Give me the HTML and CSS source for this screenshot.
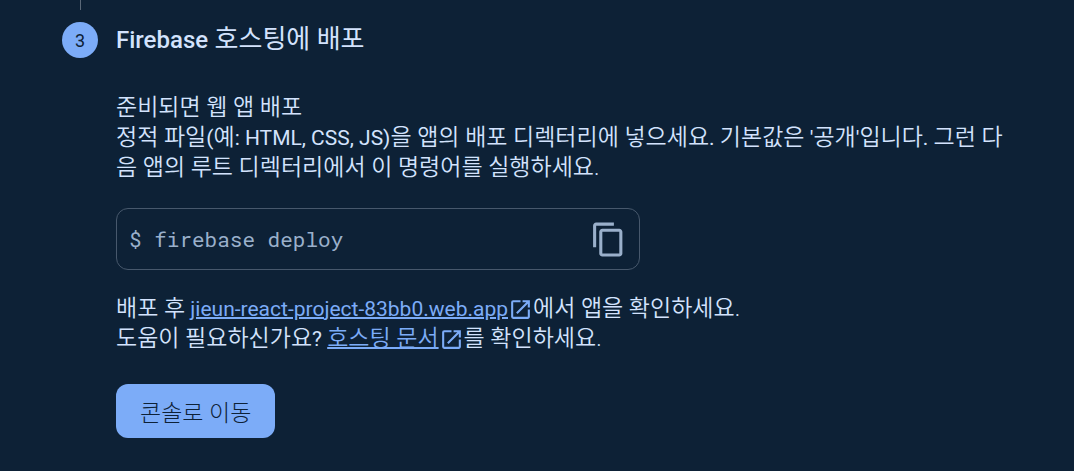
FILE: index.html
```
<!DOCTYPE html>
<html lang="ko">
<head>
<meta charset="utf-8">
<title>Firebase 호스팅에 배포</title>
<link rel="stylesheet" href="styles.css">
</head>
<body>
<main class="step">
  <div class="rail">
    <span class="rail-line"></span>
    <span class="step-number">3</span>
  </div>
  <section class="content">
    <h2 class="title"><span class="title-latin">Firebase</span> 호스팅에 배포</h2>
    <p class="text">준비되면 웹 앱 배포<br>정적 파일<span class="latin">(</span>예<span class="latin">: HTML, CSS, JS)</span>을 앱의 배포 디렉터리에 넣으세요<span class="latin">. </span>기본값은<span class="latin"> '</span>공개<span class="latin">'</span>입니다<span class="latin">. </span>그런 다음 앱의 루트 디렉터리에서 이 명령어를 실행하세요.</p>
    <div class="command">
      <code class="code">$ firebase deploy</code>
      <button class="copy" type="button" aria-label="복사">
        <svg class="copy-icon" viewBox="0 0 24 24" aria-hidden="true"><path d="M15.500 1H4c-1.100 0-2 .9-2 2v14h2V3h11.500zM19 5H8c-1.100 0-2 .9-2 2v14c0 1.100.9 2 2 2h11c1.100 0 2-.9 2-2V7c0-1.100-.9-2-2-2zm0 16H8V7h11v14z"/></svg>
      </button>
    </div>
    <p class="text">배포 후<span class="latin"> <a class="link" href="#">jieun-react-project-83bb0.web.app</a></span><svg class="open-icon" viewBox="0 0 24 24" aria-hidden="true"><path d="M19 19H5V5h7V3H5a2 2 0 0 0-2 2v14a2 2 0 0 0 2 2h14c1.100 0 2-.9 2-2v-7h-2v7zM14 3v2h3.590l-9.830 9.830 1.410 1.410L19 6.410V10h2V3h-7z"/></svg>에서 앱을 확인하세요.<br>도움이 필요하신가요<span class="latin">? </span><a class="link" href="#">호스팅 문서</a><svg class="open-icon" viewBox="0 0 24 24" aria-hidden="true"><path d="M19 19H5V5h7V3H5a2 2 0 0 0-2 2v14a2 2 0 0 0 2 2h14c1.100 0 2-.9 2-2v-7h-2v7zM14 3v2h3.590l-9.830 9.830 1.410 1.410L19 6.410V10h2V3h-7z"/></svg>를 확인하세요.</p>
    <button class="primary" type="button">콘솔로 이동</button>
  </section>
</main>
</body>
</html>
```
FILE: styles.css
```
* { box-sizing: border-box; }
body {
  margin: 0;
  background: #0d2136;
  color: #d3e3fd;
  font-family: Roboto, "Noto Sans CJK KR", sans-serif;
}
.step {
  display: flex;
  gap: 18px;
  padding: 0 62px;
}
.rail {
  display: flex;
  flex-direction: column;
  align-items: center;
  gap: 12px;
}
.rail-line {
  width: 1px;
  height: 10px;
  background: #5a6878;
}
.step-number {
  display: grid;
  place-items: center;
  width: 36px;
  height: 36px;
  border-radius: 50%;
  background: #7cacf8;
  color: #0d2136;
  font-size: 18px;
}
.content {
  flex: 1;
  padding-top: 24px;
}
.title {
  margin: 0 0 39px;
  font-size: 26px;
  line-height: 30px;
  font-weight: 400;
}
.title-latin {
  font-size: 24px;
  font-weight: 500;
  line-height: 1;
}
.text {
  margin: 0;
  font-size: 23px;
  line-height: 30px;
  font-weight: 350;
  word-break: break-all;
}
.latin {
  font-size: 21px;
  font-weight: 400;
  line-height: 1;
}
.command {
  display: flex;
  align-items: center;
  justify-content: space-between;
  max-width: 524px;
  height: 62px;
  margin: 25px 0 24px;
  padding: 0 12px;
  border: 1px solid #47586c;
  border-radius: 12px;
}
.code {
  color: #9ab0cb;
  font-family: "Roboto Mono", "DejaVu Sans Mono", monospace;
  font-size: 21px;
}
.copy {
  display: flex;
  padding: 0;
  border: 0;
  background: none;
}
.copy-icon {
  width: 37px;
  height: 37px;
  fill: #9ab0cb;
}
.link {
  color: #7cacf8;
  text-decoration: underline;
  text-decoration-thickness: 2px;
}
.open-icon {
  width: 25px;
  height: 25px;
  vertical-align: -6px;
  fill: #7cacf8;
}
.primary {
  height: 54px;
  margin-top: 30px;
  padding: 0 24px;
  border: 0;
  border-radius: 12px;
  background: #7cacf8;
  color: #0d2136;
  font-family: inherit;
  font-size: 23px;
  font-weight: 300;
}
```
